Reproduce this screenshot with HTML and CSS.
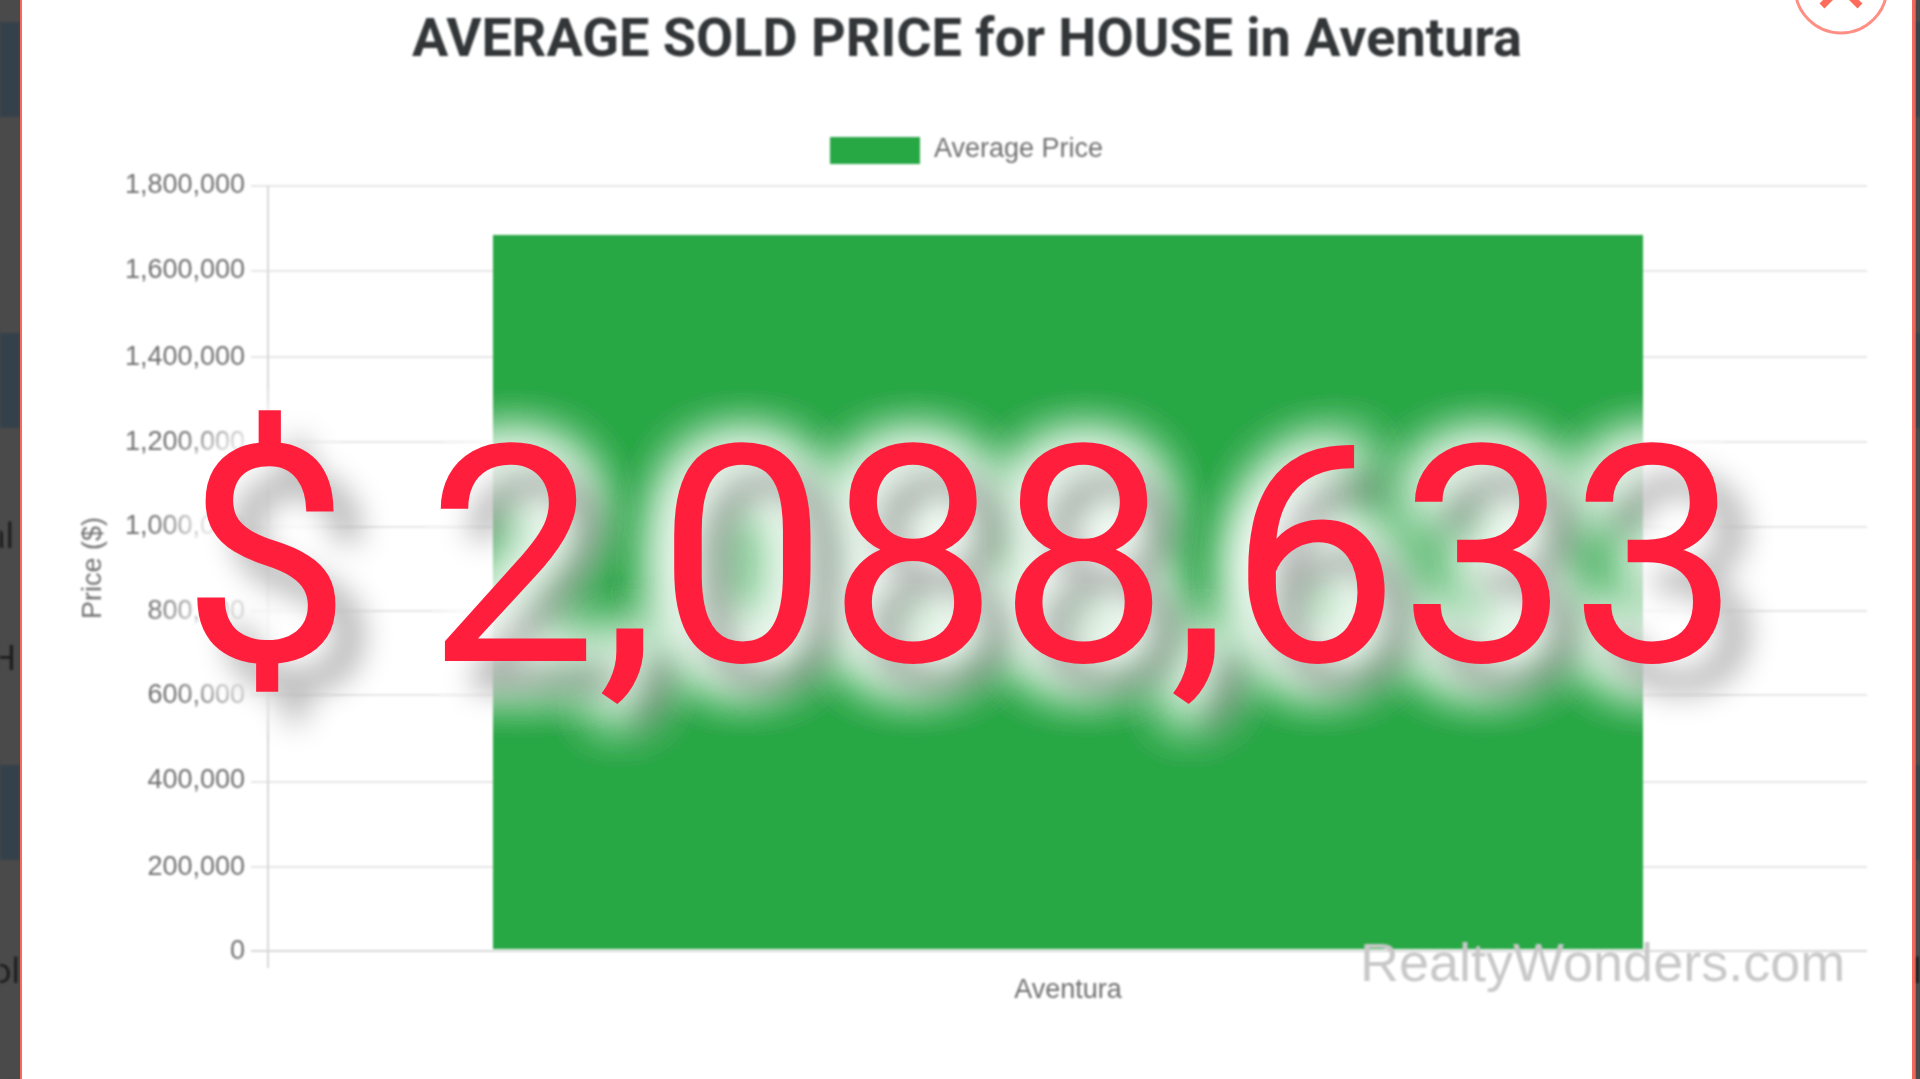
FILE: index.html
```html
<!DOCTYPE html>
<html lang="en">
<head>
<meta charset="utf-8">
<title>Average Sold Price</title>
<link rel="stylesheet" href="styles.css">
</head>
<body>
<div class="page">
  <aside class="strip strip-left">
    <div class="band band-a"></div>
    <div class="band band-blue band-b"></div>
    <div class="band band-c"></div>
    <div class="band band-blue band-b"></div>
    <div class="band band-d">
      <span class="crumb crumb-al">al</span>
      <span class="crumb crumb-h">H</span>
    </div>
    <div class="band band-blue band-b"></div>
    <div class="band band-e">
      <span class="crumb crumb-ol">ol</span>
    </div>
  </aside>
  <main class="modal">
    <div class="close">
      <svg class="close-icon" viewBox="0 0 100 50" aria-hidden="true">
        <circle class="close-ring" cx="50" cy="0" r="46"/>
        <path class="close-x" d="M31 -19L69 19M69 -19L31 19"/>
      </svg>
    </div>
    <h1 class="title">AVERAGE SOLD PRICE for HOUSE in Aventura</h1>
    <div class="chart">
      <svg class="chart-svg" viewBox="22 72 1890 1007" aria-label="Average Price chart">
        <rect class="swatch" x="830" y="137" width="90" height="27"/>
        <text class="label" x="934" y="157">Average Price</text>

        <g class="grid">
          <path d="M251 186H1867M251 271H1867M251 357H1867M251 442H1867M251 527H1867M251 611H1867M251 695H1867M251 782H1867M251 867H1867"/>
        </g>
        <path class="axis" d="M268 186V968M251 951H1867"/>

        <g class="ticks">
          <text x="245" y="193">1,800,000</text>
          <text x="245" y="278">1,600,000</text>
          <text x="245" y="365">1,400,000</text>
          <text x="245" y="450">1,200,000</text>
          <text x="245" y="534">1,000,000</text>
          <text x="245" y="619">800,000</text>
          <text x="245" y="703">600,000</text>
          <text x="245" y="788">400,000</text>
          <text x="245" y="875">200,000</text>
          <text x="245" y="959">0</text>
        </g>

        <text class="label y-title" transform="translate(101 568) rotate(-90)">Price ($)</text>
        <rect class="bar" x="493" y="235" width="1150" height="714"/>
        <text class="label x-title" x="1068" y="998">Aventura</text>
        <text class="watermark" x="1360" y="981">RealtyWonders.com</text>
      </svg>
      <div class="big-price">$ 2,088,633</div>
    </div>
  </main>
  <aside class="strip strip-right">
    <div class="band band-a"></div>
    <div class="band band-blue band-b"></div>
    <div class="band band-c"></div>
    <div class="band band-blue band-b"></div>
    <div class="band band-d"></div>
    <div class="band band-blue band-b"></div>
    <div class="band band-e">
      <span class="crumb crumb-r">l</span>
    </div>
  </aside>
</div>
</body>
</html>
```
FILE: styles.css
```css
* { box-sizing: border-box; }
html, body { margin: 0; height: 100%; overflow: hidden; background: #4a4a4a; }

.page {
  display: flex;
  width: 1920px;
  height: 1079px;
  overflow: hidden;
}

/* darkened page behind the modal */
.strip {
  display: flex;
  flex-direction: column;
  flex: none;
  overflow: hidden;
  background: #4a4a4a;
  filter: blur(0.8px);
}
.strip-left { width: 20px; }
.strip-right { width: 4px; }
.band { flex: none; overflow: hidden; }
.band-blue { background: #35414a; }
.band-a { height: 22px; }
.band-b { height: 95px; }
.band-c { height: 216px; }
.band-d { height: 337px; }
.band-e { height: 219px; }

.crumb {
  display: block;
  font-family: Roboto, "Liberation Sans", sans-serif;
  font-size: 35px;
  line-height: 40px;
  color: #1d1d1d;
  white-space: nowrap;
  direction: rtl;
}
.crumb-al { width: 14px; margin-top: 89px; }
.crumb-h { width: 16px; margin-top: 82px; }
.crumb-ol { width: 20px; margin-top: 92px; }
.crumb-r { width: 4px; margin-top: 92px; direction: ltr; text-indent: -3px; }

/* modal */
.modal {
  position: relative;
  flex: none;
  width: 1896px;
  height: 1079px;
  background: #fff;
  border-left: 2px solid #f4695c;
  border-right: 4px solid #f4695c;
  overflow: hidden;
}

.close {
  position: absolute;
  left: 1769px;
  top: -13px;
  width: 100px;
  height: 50px;
  filter: blur(0.7px);
}
.close-icon { display: block; width: 100px; height: 50px; overflow: visible; }
.close-ring { fill: none; stroke: #ff8f85; stroke-width: 3; }
.close-x { fill: none; stroke: #ff6b5b; stroke-width: 7; }

.title {
  margin: 0;
  height: 72px;
  padding-top: 8px;
  font-family: Roboto, "Liberation Sans", sans-serif;
  font-size: 54px;
  line-height: 60px;
  font-weight: 700;
  color: #333638;
  text-align: center;
  white-space: nowrap;
  filter: blur(0.8px);
}

.chart { position: relative; height: 1007px; }
.chart-svg { display: block; width: 1890px; height: 1007px; filter: blur(1.2px); }

.swatch, .bar { fill: #28a745; }
.label, .ticks text {
  font-family: "Liberation Sans", Arial, sans-serif;
  font-size: 27px;
  fill: #707070;
}
.ticks text { text-anchor: end; }
.x-title, .y-title { text-anchor: middle; }
.grid path { fill: none; stroke: #e6e6e6; stroke-width: 2; }
.axis { fill: none; stroke: #d8d8d8; stroke-width: 2; }
.watermark {
  font-family: "Liberation Sans", Arial, sans-serif;
  font-size: 54px;
  fill: #c8c8c8;
}

.big-price {
  position: absolute;
  left: 159px;
  top: 309px;
  font-family: Roboto, "Liberation Sans", sans-serif;
  font-size: 303.5px;
  line-height: 352px;
  font-weight: 400;
  color: #ff1f3d;
  white-space: nowrap;
  text-shadow:
    28px 30px 30px rgba(0, 0, 0, 0.3),
    2px 10px 60px #fff,
    2px 10px 60px #fff,
    2px 10px 60px #fff,
    2px 10px 60px #fff,
    2px 10px 60px #fff;
}
```
